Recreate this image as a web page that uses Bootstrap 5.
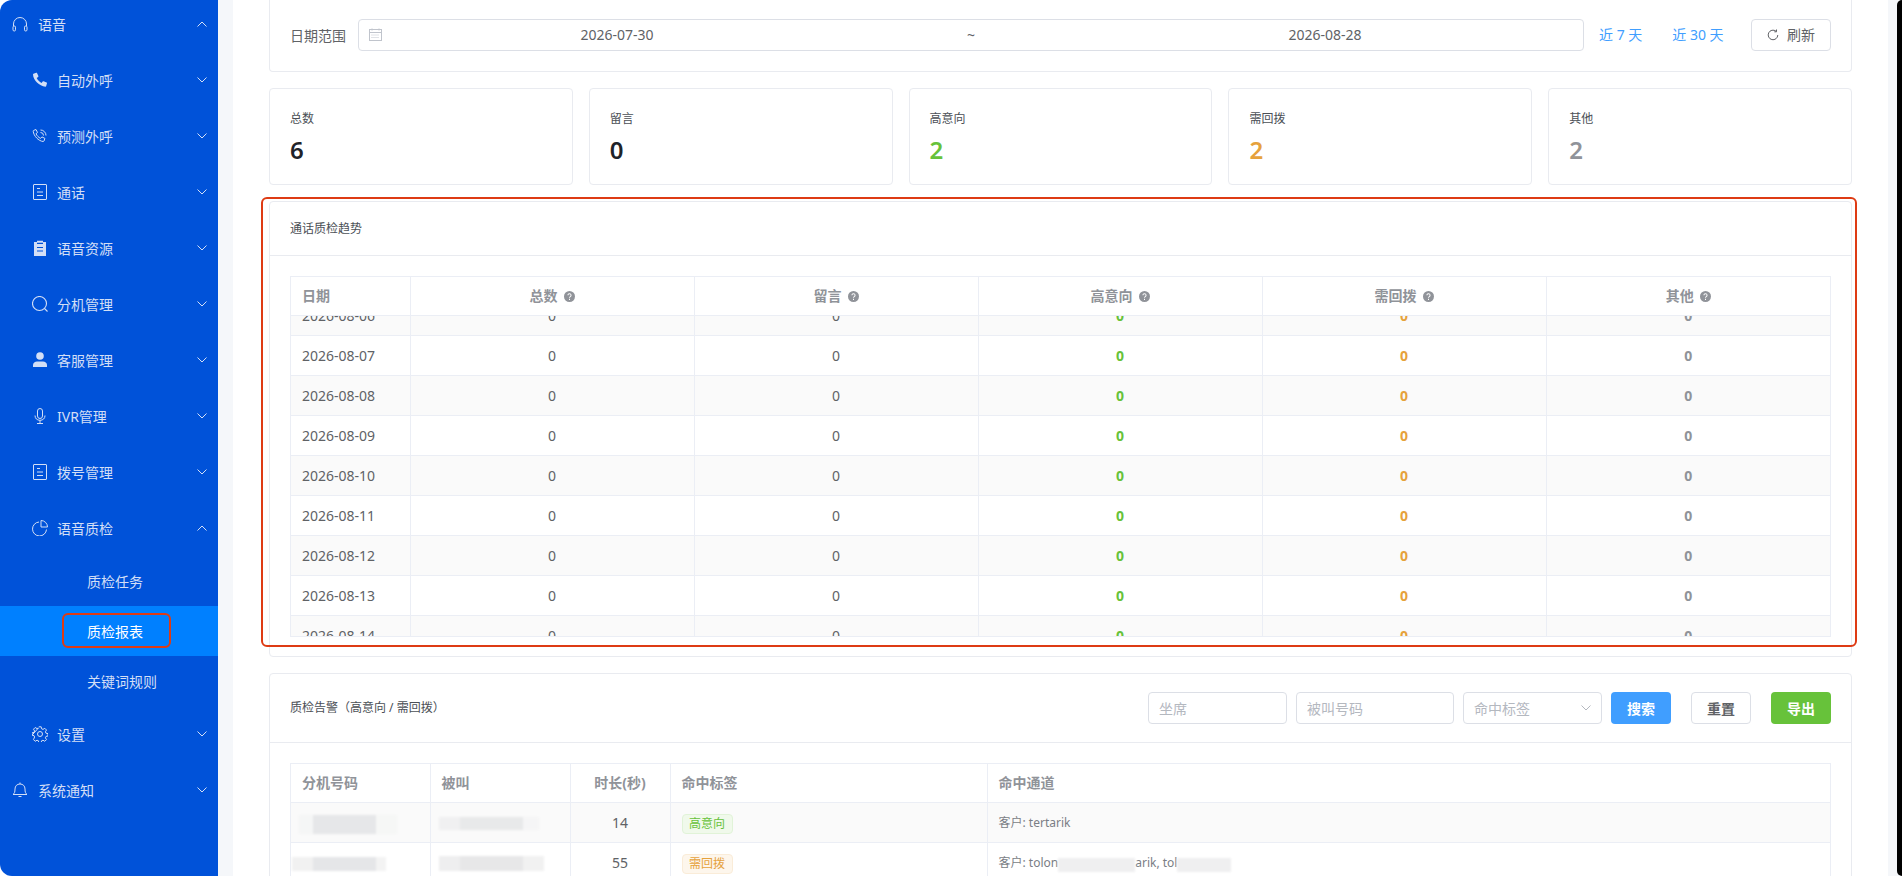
<!DOCTYPE html>
<html lang="zh-CN">
  <head>
    <meta charset="UTF-8" />
    <meta name="viewport" content="width=device-width, initial-scale=1.0" />
    <title>质检报表</title>
    <link href="https://cdn.jsdelivr.net/npm/bootstrap@5.3.0/dist/css/bootstrap.min.css" rel="stylesheet" />
    <style>
      html, body {
        height: 100%;
        overflow: hidden;
      }

      body {
        font-family: "Noto Sans", "Noto Sans CJK SC", sans-serif;
        font-size: 14px;
        color: #606266;
        background: #fff;
      }

      .app-shell {
        height: 876px;
        background: #f5f7fa;
        border-radius: 12px 0 0 12px;
        overflow: hidden;
      }

      /* the next window peeks in at the right edge */
      .edge-strip {
        width: 5px;
        flex: none;
        margin-left: 9px;
        background: #000;
        border-radius: 5px 0 0 5px;
      }

      /* sidebar */
      .side-menu {
        width: 218px;
        flex: none;
        background: #0052d9;
        color: #d3dff6;
      }

      .side-row {
        height: 56px;
        padding: 0 11px 0 12px;
      }

      .side-row.first-row {
        height: 48px;
        margin-bottom: 4px;
      }

      .side-row.lvl-2 {
        padding-left: 32px;
      }

      .side-row svg.side-icon {
        width: 16px;
        height: 16px;
        margin-right: 10px;
        flex: none;
      }

      .side-row.lvl-2 svg.side-icon {
        margin-right: 9px;
      }

      .side-row .chev {
        width: 10px;
        height: 6px;
        margin-left: auto;
      }

      .side-sub {
        height: 50px;
        padding-left: 87px;
      }

      .side-sub.on {
        background: #0080ff;
        color: #fff;
      }

      .hl-box {
        position: absolute;
        left: 62px;
        top: 7px;
        width: 109px;
        height: 35px;
        border: 2px solid #de3b14;
        border-radius: 6px;
      }

      /* content */
      .content-pane {
        width: 1655px;
        margin-left: 15px;
        flex: none;
        background: #fff;
        padding: 0 36px;
      }

      .panel-box {
        border: 1px solid #e9ebf0;
        border-radius: 4px;
        background: #fff;
      }

      .date-panel {
        height: 72px;
        border-top: 0;
        border-radius: 0 0 4px 4px;
        padding: 0 20px 2px;
        margin-bottom: 16px;
      }

      .date-label {
        width: 68px;
        flex: none;
        padding-top: 2px;
      }

      .date-input {
        width: 1226px;
        height: 32px;
        flex: none;
        border: 1px solid #dcdfe6;
        border-radius: 4px;
        padding: 0 25px 0 10px;
      }

      .date-input svg {
        flex: none;
        margin-right: 2px;
      }

      .date-part {
        width: 466px;
        flex: none;
        text-align: center;
      }

      .date-sep {
        flex: 1;
        text-align: center;
      }

      .quick-link {
        color: #409eff;
        margin-left: 15px;
      }

      .quick-link + .quick-link {
        margin-left: 30px;
      }

      .plain-btn {
        width: 80px;
        height: 32px;
        flex: none;
        color: #606266;
        border: 1px solid #dcdfe6;
        border-radius: 4px;
        background: #fff;
        padding: 0;
      }

      .stat-box {
        flex: 1 1 0;
        height: 97px;
        padding: 21px 20px 0;
      }

      .stat-name {
        font-size: 12px;
        color: #4b4f56;
        line-height: 18px;
      }

      .stat-num {
        font-size: 24px;
        font-weight: 600;
        line-height: 32px;
        margin-top: 6px;
        color: #1f2329;
      }

      .num-green { color: #67c23a; }
      .num-orange { color: #e6a23c; }
      .num-gray { color: #909399; }

      .trend-panel {
        height: 456px;
        margin-top: 16px;
        position: relative;
      }

      .trend-outline {
        position: absolute;
        left: -9px;
        right: -6px;
        top: -5px;
        bottom: 9px;
        border: 2px solid #de3b14;
        border-radius: 6px;
        pointer-events: none;
        z-index: 2;
      }

      .panel-head {
        font-size: 12px;
        color: #4b4f56;
        padding: 0 20px;
        border-bottom: 1px solid #e9ebf0;
      }

      .trend-panel .panel-head { height: 54px; }

      .table-frame {
        margin: 20px 20px 0;
        border: 1px solid #ebeef5;
        border-bottom: 0;
      }

      .trend-panel .table-frame {
        border-bottom: 1px solid #ebeef5;
      }

      .grid-table {
        table-layout: fixed;
        width: 100%;
        margin: 0;
        border-collapse: collapse;
      }

      .grid-table th,
      .grid-table td {
        border-bottom: 1px solid #ebeef5;
        border-right: 1px solid #ebeef5;
        padding: 0 11px;
        height: 40px;
        font-weight: 400;
        color: #606266;
        text-align: center;
        white-space: nowrap;
      }

      .grid-table th:last-child,
      .grid-table td:last-child {
        border-right: 0;
      }

      .grid-table th {
        height: 38px;
        color: #909399;
        font-weight: 700;
      }

      .grid-table tr:nth-child(even) td {
        background: #fafafa;
      }

      .grid-table .cell-left {
        text-align: left;
      }

      .grid-table .cell-green { color: #67c23a; font-weight: 700; }
      .grid-table .cell-orange { color: #e6a23c; font-weight: 700; }
      .grid-table .cell-gray { color: #909399; font-weight: 700; }

      .grid-table .col-date { width: 119px; }

      .trend-scroll {
        height: 320px;
        overflow-y: scroll;
        scrollbar-width: none;
      }

      .help-dot {
        display: inline-block;
        width: 11px;
        height: 11px;
        margin-left: 6px;
        vertical-align: -1px;
      }

      .alert-panel {
        height: 400px;
      }

      .alert-panel .panel-head { height: 69px; }

      .alert-input {
        height: 32px;
        flex: none;
        border: 1px solid #dcdfe6;
        border-radius: 4px;
        padding: 0 10px;
        font-size: 14px;
        color: #b4b8bf;
        background: #fff;
      }

      .alert-input::placeholder {
        color: #b4b8bf;
      }

      .w-agent, .w-tag { width: 139px; }
      .w-called { width: 158px; }
      .ms-near { margin-left: 9px; }
      .ms-far { margin-left: 20px; }

      .act-btn {
        width: 60px;
        height: 32px;
        flex: none;
        border-radius: 4px;
        font-size: 14px;
        font-weight: 700;
        border: 0;
        padding: 0;
        color: #fff;
      }

      .act-search { background: #409eff; }
      .act-export { background: #67c23a; }
      .act-reset {
        background: #fff;
        color: #606266;
        border: 1px solid #dcdfe6;
      }

      .tag-green,
      .tag-orange {
        display: inline-block;
        width: 51px;
        height: 20px;
        line-height: 18px;
        margin-top: 4px;
        font-size: 12px;
        text-align: center;
        border-radius: 4px;
        border: 1px solid;
        vertical-align: middle;
      }

      .tag-green { color: #67c23a; background: #f0f9eb; border-color: #e1f3d8; }
      .tag-orange { color: #e6a23c; background: #fdf6ec; border-color: #faecd8; }

      .grid-table .channel-cell {
        font-size: 12px;
        color: #7a7e85;
        padding-top: 2px;
      }

      /* mosaic over the masked numbers and words */
      .blur-bit {
        display: inline-block;
        vertical-align: middle;
        filter: blur(1px);
      }

      .mask-a {
        width: 98px;
        height: 19px;
        margin-left: -3px;
        margin-top: 3px;
        background: linear-gradient(to right, #f5f6f6 14px, #e6e7e9 14px, #e6e7e9 77px, #f6f7f6 77px);
      }

      .mask-b {
        width: 100px;
        height: 13px;
        margin-left: -3px;
        background: linear-gradient(to right, #f0f0f1 21px, #e8e9ea 21px, #e8e9ea 84px, #f5f5f6 84px);
      }

      .mask-c {
        width: 94px;
        height: 14px;
        margin-left: -10px;
        background: linear-gradient(to right, #f1f1f1 21px, #e5e6e8 21px, #e5e6e8 84px, #f3f3f3 84px);
      }

      .mask-d {
        width: 105px;
        height: 15px;
        margin-left: -3px;
        background: linear-gradient(to right, #eeeeef 21px, #e7e7e8 21px, #e7e7e8 84px, #f1f1f1 84px);
      }

      .mask-word {
        height: 14px;
        background: #efeff0;
        margin-top: 2px;
      }

      .w-word-a { width: 77px; }
      .w-word-b { width: 54px; }
    </style>
  </head>
  <body>
    <div class="app-shell d-flex">
      <!-- Sidebar -->
      <aside class="side-menu">
        <div class="side-row first-row d-flex align-items-center">
          <svg class="side-icon" viewBox="0 0 16 16" fill="none" stroke="currentColor" stroke-width="1"><path d="M1.500 10V8a6.500 6.500 0 0 1 13 0v2"/><rect x="1" y="10" width="2.500" height="5" rx="1.200"/><rect x="12.500" y="10" width="2.500" height="5" rx="1.200"/></svg>
          <span>语音</span>
          <svg class="chev" viewBox="0 0 10 6" fill="none" stroke="currentColor"><path d="M.5 5.500 5 1l4.500 4.500"/></svg>
        </div>
        <div class="side-row lvl-2 d-flex align-items-center">
          <svg class="side-icon" viewBox="0 0 16 16" fill="currentColor"><path d="M1.500 1.800 4.200.8c.4-.1.7 0 .9.400l1.300 2.900c.1.300 0 .7-.3.900L4.700 6c.9 2 2.700 3.900 4.900 5l1.100-1.500c.2-.3.600-.4.900-.3l3 1.200c.4.200.5.500.4.900l-.8 2.800c-.1.400-.4.600-.8.600C7.300 14.200 1.300 8.400 1 2.600c0-.4.200-.7.500-.8z"/></svg>
          <span>自动外呼</span>
          <svg class="chev" viewBox="0 0 10 6" fill="none" stroke="currentColor"><path d="M.5.500 5 5 9.500.500"/></svg>
        </div>
        <div class="side-row lvl-2 d-flex align-items-center">
          <svg class="side-icon" viewBox="0 0 16 16" fill="none" stroke="currentColor" stroke-width="1"><path d="M1.500 2.500 4 1.500l1.500 3-1.500 1.200c.9 2.100 2.500 3.700 4.600 4.700l1.300-1.500 3 1.500-.9 2.600c-.2.400-.5.500-.9.500C6.500 13 1.700 8 1.200 3.200c0-.3.100-.6.300-.7z"/><path d="M8.500 2a5.500 5.500 0 0 1 5.500 5.500M8.500 4.500a3 3 0 0 1 3 3"/></svg>
          <span>预测外呼</span>
          <svg class="chev" viewBox="0 0 10 6" fill="none" stroke="currentColor"><path d="M.5.500 5 5 9.500.500"/></svg>
        </div>
        <div class="side-row lvl-2 d-flex align-items-center">
          <svg class="side-icon" viewBox="0 0 16 16" fill="none" stroke="currentColor" stroke-width="1"><rect x="1.500" y=".5" width="13" height="15" rx=".5"/><path d="M5 4.500h3M5 8h6M5 11.500h6"/></svg>
          <span>通话</span>
          <svg class="chev" viewBox="0 0 10 6" fill="none" stroke="currentColor"><path d="M.5.500 5 5 9.500.500"/></svg>
        </div>
        <div class="side-row lvl-2 d-flex align-items-center">
          <svg class="side-icon" viewBox="0 0 16 16"><path fill="currentColor" d="M2 2h3V.8h6V2h3v14H2z"/><path stroke="#0052d9" stroke-width="1.200" d="M5 3.300h6M5 7.500h6M5 11h6"/></svg>
          <span>语音资源</span>
          <svg class="chev" viewBox="0 0 10 6" fill="none" stroke="currentColor"><path d="M.5.500 5 5 9.500.500"/></svg>
        </div>
        <div class="side-row lvl-2 d-flex align-items-center">
          <svg class="side-icon" viewBox="0 0 16 16" fill="none" stroke="currentColor" stroke-width="1.100"><circle cx="7.500" cy="7.500" r="7"/><path d="m12.500 12.500 3 3"/></svg>
          <span>分机管理</span>
          <svg class="chev" viewBox="0 0 10 6" fill="none" stroke="currentColor"><path d="M.5.500 5 5 9.500.500"/></svg>
        </div>
        <div class="side-row lvl-2 d-flex align-items-center">
          <svg class="side-icon" viewBox="0 0 16 16" fill="currentColor"><circle cx="8" cy="4" r="3.800"/><path d="M1 15v-2c0-2 2-3.500 4-3.500h6c2 0 4 1.500 4 3.500v2z"/></svg>
          <span>客服管理</span>
          <svg class="chev" viewBox="0 0 10 6" fill="none" stroke="currentColor"><path d="M.5.500 5 5 9.500.500"/></svg>
        </div>
        <div class="side-row lvl-2 d-flex align-items-center">
          <svg class="side-icon" viewBox="0 0 16 16" fill="none" stroke="currentColor" stroke-width="1"><rect x="5.500" y=".5" width="5" height="10" rx="2.500"/><path d="M3 7.500c0 3 2 4.800 5 4.800s5-1.800 5-4.800M8 12.300v3M5 15.500h6"/></svg>
          <span>IVR管理</span>
          <svg class="chev" viewBox="0 0 10 6" fill="none" stroke="currentColor"><path d="M.5.500 5 5 9.500.500"/></svg>
        </div>
        <div class="side-row lvl-2 d-flex align-items-center">
          <svg class="side-icon" viewBox="0 0 16 16" fill="none" stroke="currentColor" stroke-width="1"><rect x="1.500" y=".5" width="13" height="15" rx=".5"/><path d="M5 4.500h3M5 8h6M5 11.500h6"/></svg>
          <span>拨号管理</span>
          <svg class="chev" viewBox="0 0 10 6" fill="none" stroke="currentColor"><path d="M.5.500 5 5 9.500.500"/></svg>
        </div>
        <div class="side-row lvl-2 d-flex align-items-center">
          <svg class="side-icon" viewBox="0 0 16 16" fill="none" stroke="currentColor" stroke-width="1"><path d="M7 2a7 7 0 1 0 7.500 7.500"/><path d="M9 .5A6.500 6.500 0 0 1 15.500 7H9z"/></svg>
          <span>语音质检</span>
          <svg class="chev" viewBox="0 0 10 6" fill="none" stroke="currentColor"><path d="M.5 5.500 5 1l4.500 4.500"/></svg>
        </div>
        <div class="side-sub d-flex align-items-center">质检任务</div>
        <div class="side-sub on d-flex align-items-center position-relative">质检报表<span class="hl-box"></span></div>
        <div class="side-sub d-flex align-items-center">关键词规则</div>
        <div class="side-row lvl-2 d-flex align-items-center">
          <svg class="side-icon" viewBox="0 0 16 16" fill="none" stroke="currentColor" stroke-width="1"><circle cx="8" cy="8" r="2.500"/><path d="M6.800.8h2.400l.4 2 1.400.6 1.800-1.100 1.700 1.700-1.100 1.800.6 1.400 2 .4v2.400l-2 .4-.6 1.400 1.100 1.800-1.700 1.700-1.800-1.100-1.400.6-.4 2H6.800l-.4-2-1.400-.6-1.800 1.100-1.700-1.700L2.600 11 2 9.600l-2-.4"/><path d="M0 9.200V6.800l2-.4.600-1.400-1.100-1.800 1.700-1.700L5 2.600l1.400-.6z"/></svg>
          <span>设置</span>
          <svg class="chev" viewBox="0 0 10 6" fill="none" stroke="currentColor"><path d="M.5.500 5 5 9.500.500"/></svg>
        </div>
        <div class="side-row d-flex align-items-center">
          <svg class="side-icon" viewBox="0 0 16 16" fill="none" stroke="currentColor" stroke-width="1"><path d="M1 12.500h14c-1.500-1-2-2.500-2-5.500 0-3-2-5-5-5S3 4 3 7c0 3-.5 4.500-2 5.500zM8 .5V2M6.500 14.500h3"/></svg>
          <span>系统通知</span>
          <svg class="chev" viewBox="0 0 10 6" fill="none" stroke="currentColor"><path d="M.5.500 5 5 9.500.500"/></svg>
        </div>
      </aside>

      <!-- Main content -->
      <main class="content-pane">
        <div class="panel-box date-panel d-flex align-items-center">
          <span class="date-label">日期范围</span>
          <div class="date-input d-flex align-items-center">
            <svg width="13" height="13" viewBox="0 0 13 13" fill="none" stroke="#c0c4cc"><rect x=".5" y="1.500" width="12" height="11"/><path d="M.5 4.500h12M3 .5v2M10 .5v2"/><path stroke-dasharray="1 1" d="M2.500 7h8M2.500 9.500h8"/></svg>
            <span class="date-part">2026-07-30</span>
            <span class="date-sep">~</span>
            <span class="date-part">2026-08-28</span>
          </div>
          <span class="quick-link">近 7 天</span>
          <span class="quick-link">近 30 天</span>
          <button class="plain-btn ms-auto d-flex align-items-center justify-content-center gap-2">
            <svg width="12" height="12" viewBox="0 0 12 12" fill="none" stroke="#606266"><path d="M10.800 6A4.800 4.800 0 1 1 9 2.200M9.500.5v2.300H7.300"/></svg>
            刷新
          </button>
        </div>

        <div class="d-flex gap-3">
          <div class="panel-box stat-box"><div class="stat-name">总数</div><div class="stat-num">6</div></div>
          <div class="panel-box stat-box"><div class="stat-name">留言</div><div class="stat-num">0</div></div>
          <div class="panel-box stat-box"><div class="stat-name">高意向</div><div class="stat-num num-green">2</div></div>
          <div class="panel-box stat-box"><div class="stat-name">需回拨</div><div class="stat-num num-orange">2</div></div>
          <div class="panel-box stat-box"><div class="stat-name">其他</div><div class="stat-num num-gray">2</div></div>
        </div>

        <div class="panel-box trend-panel">
          <span class="trend-outline"></span>
          <div class="panel-head d-flex align-items-center">通话质检趋势</div>
          <div class="table-frame">
            <table class="grid-table">
              <tr>
                <th class="cell-left col-date">日期</th>
                <th>总数<svg class="help-dot" viewBox="0 0 12 12"><circle cx="6" cy="6" r="6" fill="#909399"/><path d="M4.300 4.700a1.700 1.700 0 1 1 2.600 1.400c-.6.400-.9.600-.9 1.200M6 8.500v1.200" fill="none" stroke="#fff" stroke-width="1.100"/></svg></th>
                <th>留言<svg class="help-dot" viewBox="0 0 12 12"><circle cx="6" cy="6" r="6" fill="#909399"/><path d="M4.300 4.700a1.700 1.700 0 1 1 2.600 1.400c-.6.400-.9.600-.9 1.200M6 8.500v1.200" fill="none" stroke="#fff" stroke-width="1.100"/></svg></th>
                <th>高意向<svg class="help-dot" viewBox="0 0 12 12"><circle cx="6" cy="6" r="6" fill="#909399"/><path d="M4.300 4.700a1.700 1.700 0 1 1 2.600 1.400c-.6.400-.9.600-.9 1.200M6 8.500v1.200" fill="none" stroke="#fff" stroke-width="1.100"/></svg></th>
                <th>需回拨<svg class="help-dot" viewBox="0 0 12 12"><circle cx="6" cy="6" r="6" fill="#909399"/><path d="M4.300 4.700a1.700 1.700 0 1 1 2.600 1.400c-.6.400-.9.600-.9 1.200M6 8.500v1.200" fill="none" stroke="#fff" stroke-width="1.100"/></svg></th>
                <th>其他<svg class="help-dot" viewBox="0 0 12 12"><circle cx="6" cy="6" r="6" fill="#909399"/><path d="M4.300 4.700a1.700 1.700 0 1 1 2.600 1.400c-.6.400-.9.600-.9 1.200M6 8.500v1.200" fill="none" stroke="#fff" stroke-width="1.100"/></svg></th>
              </tr>
            </table>
            <div class="trend-scroll" id="trendScroll">
              <table class="grid-table"><tbody id="trendRows"></tbody></table>
            </div>
          </div>
        </div>

        <div class="panel-box alert-panel mt-3">
          <div class="panel-head d-flex align-items-center">
            <span class="me-auto">质检告警（高意向 / 需回拨）</span>
            <input class="alert-input w-agent" placeholder="坐席" />
            <input class="alert-input w-called ms-near" placeholder="被叫号码" />
            <div class="alert-input w-tag ms-near d-flex align-items-center justify-content-between">
              命中标签
              <svg width="10" height="6" viewBox="0 0 10 6" fill="none" stroke="#b4b8bf"><path d="M.5.500 5 5 9.500.500"/></svg>
            </div>
            <button class="act-btn act-search ms-near">搜索</button>
            <button class="act-btn act-reset ms-far">重置</button>
            <button class="act-btn act-export ms-far">导出</button>
          </div>
          <div class="table-frame">
            <table class="grid-table">
              <colgroup><col style="width:139px" /><col style="width:140px" /><col style="width:100px" /><col style="width:317px" /><col /></colgroup>
              <tr>
                <th class="cell-left">分机号码</th>
                <th class="cell-left">被叫</th>
                <th>时长(秒)</th>
                <th class="cell-left">命中标签</th>
                <th class="cell-left">命中通道</th>
              </tr>
              <tr>
                <td class="cell-left"><span class="blur-bit mask-a"></span></td>
                <td class="cell-left"><span class="blur-bit mask-b"></span></td>
                <td>14</td>
                <td class="cell-left"><span class="tag-green">高意向</span></td>
                <td class="cell-left channel-cell">客户: tertarik</td>
              </tr>
              <tr>
                <td class="cell-left"><span class="blur-bit mask-c"></span></td>
                <td class="cell-left"><span class="blur-bit mask-d"></span></td>
                <td>55</td>
                <td class="cell-left"><span class="tag-orange">需回拨</span></td>
                <td class="cell-left channel-cell">客户: tolon<span class="blur-bit mask-word w-word-a"></span>arik, tol<span class="blur-bit mask-word w-word-b"></span></td>
              </tr>
            </table>
          </div>
        </div>
      </main>
      <span class="edge-strip"></span>
    </div>

    <script src="https://cdn.jsdelivr.net/npm/bootstrap@5.3.0/dist/js/bootstrap.bundle.min.js"></script>
    <script>
      // build the daily rows, the list is already scrolled in the reference
      const rows = [];
      const start = new Date(Date.UTC(2026, 6, 30));
      for (let i = 0; i < 30; i++) {
        const day = new Date(start.getTime() + i * 86400000).toISOString().slice(0, 10);
        rows.push(
          `<tr><td class="cell-left col-date">${day}</td><td>0</td><td>0</td>` +
          `<td class="cell-green">0</td><td class="cell-orange">0</td><td class="cell-gray">0</td></tr>`
        );
      }
      document.getElementById('trendRows').innerHTML = rows.join('');
      document.getElementById('trendScroll').scrollTop = 300;
    </script>
  </body>
</html>
